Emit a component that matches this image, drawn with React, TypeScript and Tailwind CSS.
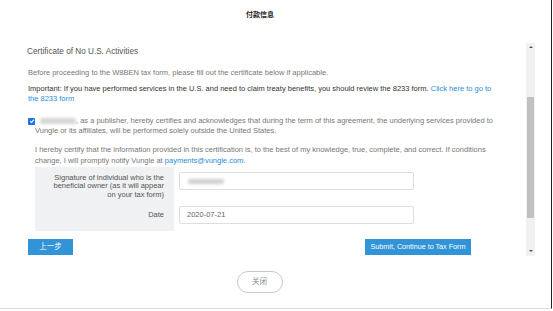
import React from 'react';

const font = { fontFamily: '"Liberation Sans", Arial, "Noto Sans CJK SC", sans-serif' };

function Checkbox() {
  return (
    <span className="-ml-[7px] mr-[5px] inline-flex h-[7px] w-[7px] translate-y-[1px] items-center justify-center rounded-[1px] bg-[#1a73e8] align-baseline">
      <svg viewBox="0 0 10 10" className="h-[6px] w-[6px]">
        <path d="M2 5.2 L4.2 7.4 L8.2 2.6" fill="none" stroke="white" strokeWidth="1.8" />
      </svg>
    </span>
  );
}

function Scrollbar() {
  return (
    <div className="flex w-[9px] flex-col bg-[#f1f1f1]">
      <div className="flex h-[8px] items-center justify-center">
        <span className="h-0 w-0 border-x-[2px] border-b-[2px] border-x-transparent border-b-[#555]" />
      </div>
      <div className="h-[46px]" />
      <div className="mx-[1px] h-[121px] bg-[#c1c1c1]" />
      <div className="flex-1" />
      <div className="flex h-[10px] items-center justify-center">
        <span className="h-0 w-0 border-x-[2px] border-t-[2px] border-x-transparent border-t-[#555]" />
      </div>
    </div>
  );
}

export default function App() {
  return (
    <div className="h-[311px] w-[553px] bg-white" style={font}>
      <div className="flex h-[309px] w-[552px] flex-col border-r border-b border-r-[#222] border-b-[#dcdcdc]">
        <header className="h-[43px] pt-[10px]">
          <div className="ml-[246px] text-[7px] leading-[10px] font-bold text-[#222]">付款信息</div>
        </header>

        <div className="flex h-[213px]">
          <div className="w-[526px] pl-[28px] pr-[31px]">
            <h2 className="mt-[4px] -ml-[1px] text-[8.2px] leading-[10px] text-[#555]">Certificate of No U.S. Activities</h2>

            <p className="mt-[11px] text-[7.5px] leading-[10px] text-[#777]">
              Before proceeding to the W8BEN tax form, please fill out the certificate below if applicable.
            </p>

            <p className="mt-[6px] text-[7.5px] leading-[10px] text-[#333]">
              Important: If you have performed services in the U.S. and need to claim treaty benefits, you should review the 8233 form.{' '}
              <span className="text-[#2a8fd6]">Click here to go to the 8233 form</span>
            </p>

            <p className="mt-[12px] pl-[7px] text-[7.5px] leading-[10px] text-[#777]">
              <Checkbox />
              <span className="inline-block h-[6px] w-[36px] translate-y-[1px] rounded-[2px] bg-[#d6d6d6] blur-[1.5px]" />
              , as a publisher, hereby certifies and acknowledges that during the term of this agreement, the underlying services provided to Vungle or its affiliates, will be performed solely outside the United States.
            </p>

            <div className="pl-[7px]">
              <p className="mt-[8px] text-[7.5px] leading-[11px] text-[#777]">
                I hereby certify that the information provided in this certification is, to the best of my knowledge, true, complete, and correct. If conditions change, I will promptly notify Vungle at{' '}
                <span className="text-[#2a8fd6]">payments@vungle.com</span>.
              </p>

              <div className="mt-[1px] text-[7.5px] text-[#555]">
                <div className="flex h-[35px]">
                  <div className="w-[139px] bg-[#f0f1f3] pt-[7px] pr-[10px] pl-[12px] text-right leading-[8.3px]">
                    Signature of individual who is the beneficial owner (as it will appear on your tax form)
                  </div>
                  <div className="pl-[5px] pt-[5px]">
                    <div className="flex h-[18px] w-[235px] items-center rounded-[2px] border border-[#dedede] bg-white pl-[8px]">
                      <span className="h-[5px] w-[36px] rounded-[2px] bg-[#d0d0d0] blur-[1.5px]" />
                    </div>
                  </div>
                </div>
                <div className="flex h-[29px]">
                  <div className="flex w-[139px] items-center justify-end bg-[#f0f1f3] pr-[10px] pb-[3px]">Date</div>
                  <div className="pl-[5px] pt-[4px]">
                    <div className="flex h-[18px] w-[235px] items-center rounded-[2px] border border-[#dedede] bg-white pl-[7px] text-[#666]">
                      2020-07-21
                    </div>
                  </div>
                </div>
              </div>
            </div>

            <div className="mt-[8px] mr-[24px] flex justify-between">
              <button className="h-[16px] w-[45px] bg-[#3094d6] text-[7.5px] text-white">上一步</button>
              <button className="h-[16px] w-[106px] bg-[#3094d6] text-[7.2px] text-white">Submit, Continue to Tax Form</button>
            </div>
          </div>
          <Scrollbar />
        </div>

        <div className="flex justify-center pt-[15px] pr-[32px]">
          <button className="h-[22px] w-[46px] rounded-full border border-[#c4c8d0] text-[7.5px] text-[#888]">关闭</button>
        </div>
      </div>
    </div>
  );
}
